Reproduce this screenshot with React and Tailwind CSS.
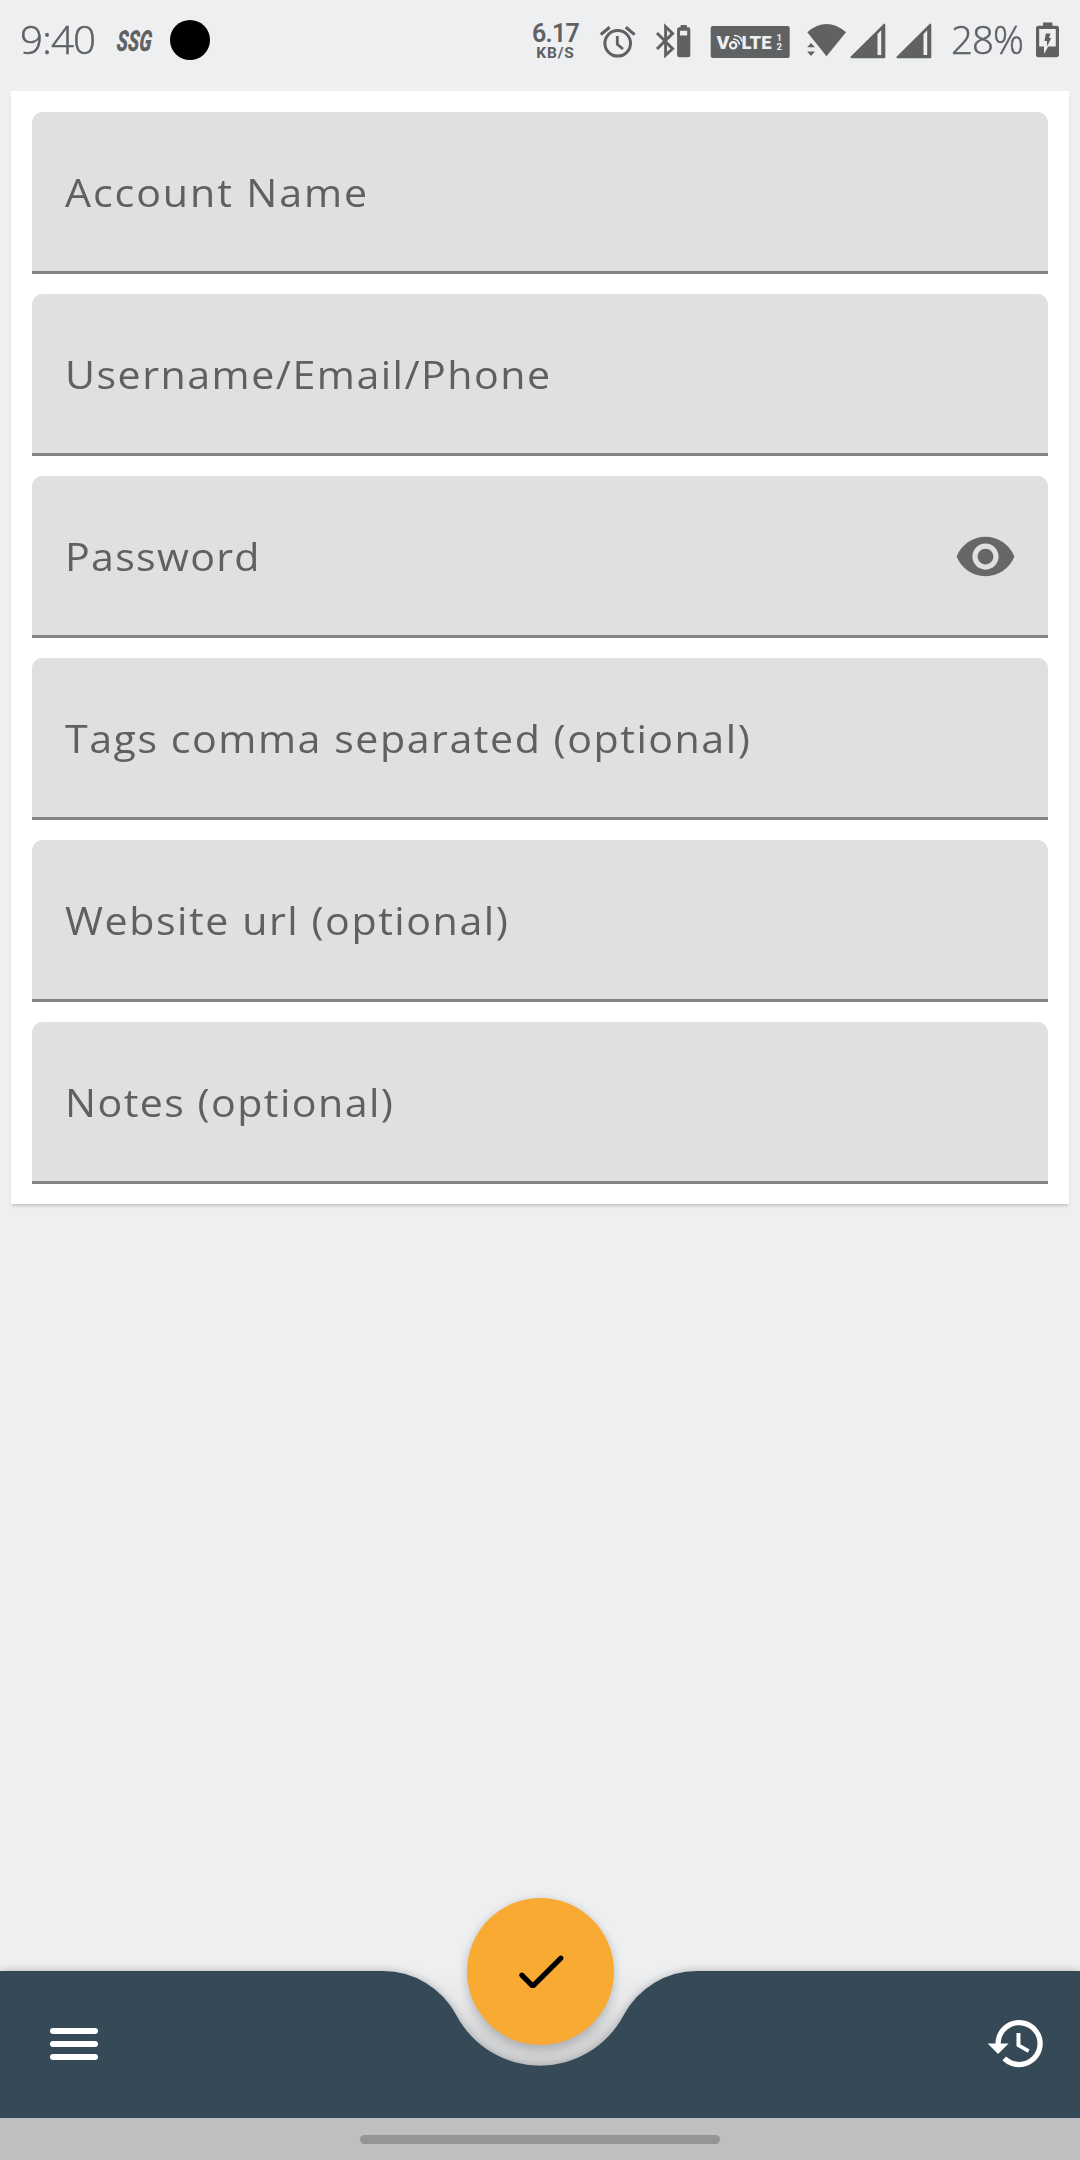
import React from 'react';

const INK = '#5f6163';

const fields = [
  { label: 'Account Name', spacing: '1.8px' },
  { label: 'Username/Email/Phone', spacing: '1.4px' },
  { label: 'Password', spacing: '1.2px', eye: true },
  { label: 'Tags comma separated (optional)', spacing: '1.43px' },
  { label: 'Website url (optional)', spacing: '1.45px' },
  { label: 'Notes (optional)', spacing: '1.35px' },
];

function Eye() {
  return (
    <svg className="mt-[1px] h-[63px] w-[63px] shrink-0" viewBox="0 0 24 24" fill="#676767">
      <path d="M12 4.5C7 4.5 2.73 7.61 1 12c1.73 4.39 6 7.5 11 7.5s9.27-3.11 11-7.5c-1.73-4.39-6-7.5-11-7.5zM12 17c-2.76 0-5-2.24-5-5s2.24-5 5-5 5 2.24 5 5-2.24 5-5 5zm0-8c-1.66 0-3 1.34-3 3s1.34 3 3 3 3-1.34 3-3-1.34-3-3-3z" />
    </svg>
  );
}

function Field({ label, spacing, eye }) {
  return (
    <div className="flex h-[162px] items-center justify-between rounded-t-[10px] border-b-[3px] border-[#848484] bg-[#e0e0e0] pl-[33px] pr-[31px]">
      <span
        className="origin-left scale-x-[1.056] whitespace-nowrap font-['Open_Sans',sans-serif] text-[39px] leading-[54px] text-[#606060]"
        style={{ letterSpacing: spacing }}
      >
        {label}
      </span>
      {eye && <Eye />}
    </div>
  );
}

function Signal({ className }) {
  return (
    <svg className={className} width="36" height="91" viewBox="0 0 36 91">
      <path d="M1.5 57.2 34.3 24.6V57.2Z" fill={INK} stroke={INK} strokeWidth="2" strokeLinejoin="round" />
      <path d="M27.5 34 31.2 30.3V55H27.5Z" fill="#eeeff1" />
    </svg>
  );
}

function StatusBar() {
  return (
    <div className="flex h-[91px] w-full items-start text-[#5f6163]">
      <span className="ml-[20px] mt-[12px] w-[77px] origin-left scale-x-[1.06] whitespace-nowrap font-['Open_Sans',sans-serif] text-[38px] font-light leading-[54px] tracking-[-0.8px] [-webkit-text-stroke:0.5px_#5f6163]">
        9:40
      </span>
      <svg className="ml-[17px]" width="44" height="91" viewBox="115 0 44 91">
        <text
          x="0"
          y="0"
          transform="translate(117 51) skewX(-6) scale(0.64 1)"
          fontFamily="Roboto, sans-serif"
          fontSize="29"
          fontWeight="900"
          fontStyle="italic"
          fill={INK}
        >
          SSG
        </text>
      </svg>
      <div className="ml-[12px] mt-[20px] h-[40px] w-[40px] rounded-full bg-black" />
      <div className="ml-[321px] flex w-[50px] flex-col items-center pt-[20px] font-['Roboto',sans-serif]">
        <span className="-ml-[1px] text-[25px] font-semibold leading-[27px] tracking-[-0.7px]">6.17</span>
        <span className="-ml-[1px] text-[15.5px] font-bold leading-[13px] tracking-[0.9px]">KB/S</span>
      </div>
      <svg className="ml-[18px]" width="38" height="91" viewBox="599 0 38 91" fill="none" stroke={INK}>
        <circle cx="617.7" cy="43.3" r="12.8" strokeWidth="3" />
        <path d="M617.3 36V44.3L623 49" strokeWidth="2.8" />
        <path d="M600.8 34.6 609.6 27.2M625.8 27.2 634.6 34.6" strokeWidth="3.2" />
      </svg>
      <svg className="ml-[17px]" width="38" height="91" viewBox="654 0 38 91">
        <path
          d="M657 33 672.6 48.6 665.6 55.2V26.6L672.6 33.4 657 49"
          fill="none"
          stroke={INK}
          strokeWidth="2.9"
        />
        <path
          fillRule="evenodd"
          fill={INK}
          d="M680.6 25H686.8V27.3H688.2Q690.3 27.3 690.3 29.4V55Q690.3 57.2 688.2 57.2H679.2Q677.1 57.2 677.1 55V29.4Q677.1 27.3 679.2 27.3H680.6ZM680 30.8V35.6H687.2V30.8Z"
        />
      </svg>
      <svg className="ml-[18px]" width="81" height="91" viewBox="710 0 81 91">
        <rect x="710.7" y="26" width="79" height="32" rx="2" fill={INK} />
        <g fill="#eeeff1" fontFamily="Roboto, sans-serif" fontWeight="900">
          <text x="716.5" y="49.4" fontSize="19" textLength="13" lengthAdjust="spacingAndGlyphs">V</text>
          <text x="741.5" y="49.4" fontSize="19" textLength="30" lengthAdjust="spacingAndGlyphs">LTE</text>
          <text x="776.6" y="41" fontSize="9.5" fontWeight="700">1</text>
          <text x="776.6" y="50" fontSize="9.5" fontWeight="700">2</text>
        </g>
        <g fill="none" stroke="#eeeff1">
          <circle cx="733.2" cy="45.3" r="3.2" strokeWidth="2.2" />
          <path d="M733 38.9Q738.6 39 739.6 44.6M734 35.6Q741 35.6 742 41.5" strokeWidth="1.5" />
        </g>
      </svg>
      <svg className="ml-[15px]" width="42" height="91" viewBox="806 0 42 91" fill={INK}>
        <path d="M807.3 32.2Q826.5 16 846 32.2L826.5 56.2Z" />
        <path d="M811 43 815 47.2H807.2ZM807.2 51.6H815L811 55.9Z" />
      </svg>
      <Signal className="ml-[2px]" />
      <Signal className="ml-[10px]" />
      <span className="ml-[19px] mt-[12px] w-[76px] origin-left scale-x-[1.01] whitespace-nowrap font-['Open_Sans',sans-serif] text-[38px] font-light leading-[54px] tracking-[-0.9px] [-webkit-text-stroke:0.5px_#5f6163]">
        28%
      </span>
      <svg className="ml-[9px]" width="24" height="91" viewBox="1036 0 24 91">
        <path
          fillRule="evenodd"
          fill={INK}
          d="M1043 22.5H1052.4V25.8H1056.5Q1059 25.8 1059 28.2V54.6Q1059 57.2 1056.5 57.2H1038.5Q1036 57.2 1036 54.6V28.2Q1036 25.8 1038.5 25.8H1043ZM1039.2 29V46.6H1044V54L1048.2 46.6H1055.8V29Z"
        />
        <path d="M1045.8 33.5H1050.6L1049 38H1051.3L1047 46.4V41H1044.4Z" fill={INK} />
      </svg>
    </div>
  );
}

function BottomBar() {
  return (
    <div className="relative flex h-[147px] w-full">
      <div className="absolute inset-x-0 bottom-0 flex h-full [clip-path:inset(-40px_0_0_0)]">
        <svg className="absolute left-[383px] top-0" width="314" height="147" viewBox="0 0 314 147">
          <defs>
            <linearGradient id="well" x1="0" y1="0" x2="0" y2="1">
              <stop offset="0" stopColor="#000" stopOpacity="0" />
              <stop offset="0.3" stopColor="#000" stopOpacity="0.03" />
              <stop offset="0.65" stopColor="#000" stopOpacity="0.1" />
              <stop offset="1" stopColor="#000" stopOpacity="0.12" />
            </linearGradient>
          </defs>
          <path d="M40 0H274V97H40Z" fill="url(#well)" />
        </svg>
        <div className="relative flex h-full w-full drop-shadow-[0_0_4px_rgba(0,0,0,0.25)]">
          <div className="h-full w-[383px] bg-[#364956]" />
          <svg width="314" height="147" viewBox="0 0 314 147">
            <path
              d="M0 0A83 83 0 0 1 73.4 44.2A94.5 94.5 0 0 0 240.6 44.2A83 83 0 0 1 314 0V147H0Z"
              fill="#364956"
            />
          </svg>
          <div className="h-full flex-1 bg-[#364956]" />
        </div>
      </div>
      <div className="relative flex w-full items-start justify-between">
        <button className="ml-[50px] mt-[57px] flex w-[48px] flex-col gap-[7px]">
          <span className="h-[6px] w-full rounded-full bg-white" />
          <span className="h-[6px] w-full rounded-full bg-white" />
          <span className="h-[6px] w-full rounded-full bg-white" />
        </button>
        <button className="mr-[32px] mt-[41px]">
          <svg className="h-[63px] w-[63px]" viewBox="0 0 24 24" fill="#fff">
            <path d="M13 3c-4.97 0-9 4.03-9 9H1l3.89 3.89.07.14L9 12H6c0-3.87 3.13-7 7-7s7 3.13 7 7-3.13 7-7 7c-1.93 0-3.68-.79-4.94-2.06l-1.42 1.42C8.27 19.99 10.51 21 13 21c4.97 0 9-4.03 9-9s-4.03-9-9-9zm-1 5v5l4.28 2.54.72-1.21-3.5-2.08V8H12z" />
          </svg>
        </button>
      </div>
      <button className="absolute left-[467px] top-[-73px] h-[147px] w-[147px] rounded-full bg-[#f9aa33] shadow-[0_5px_12px_rgba(0,0,0,0.16),0_0_10px_rgba(0,0,0,0.07)]">
        <svg width="147" height="147" viewBox="467 1898 147 147" fill="none">
          <path d="M521.8 1975.2 532.8 1986.2 560.9 1958.2" stroke="#000" strokeWidth="5.2" strokeLinecap="round" strokeLinejoin="bevel" />
        </svg>
      </button>
    </div>
  );
}

export default function App() {
  return (
    <div className="flex h-[2160px] w-[1080px] flex-col overflow-hidden bg-[#eeeff1]">
      <StatusBar />
      <div className="mx-[11px] flex flex-col gap-[20px] bg-white px-[21px] pb-[20px] pt-[21px] shadow-[0_3px_3px_-1px_rgba(0,0,0,0.18)]">
        {fields.map((f) => (
          <Field key={f.label} {...f} />
        ))}
      </div>
      <div className="flex-1" />
      <BottomBar />
      <div className="flex h-[42px] w-full items-start justify-center bg-[#bebfc1] pt-[17px]">
        <div className="h-[9px] w-[360px] rounded-full bg-[#959595]" />
      </div>
    </div>
  );
}
